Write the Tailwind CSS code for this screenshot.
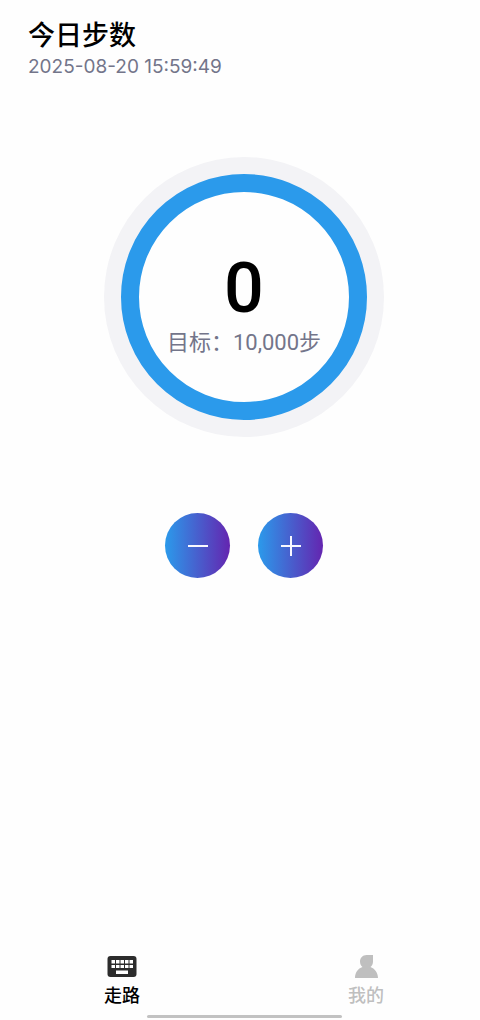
<!DOCTYPE html>
<html lang="zh-CN">
<head>
<meta charset="utf-8">
<meta name="viewport" content="width=device-width, initial-scale=1">
<title>今日步数</title>
<script src="https://cdn.jsdelivr.net/npm/@tailwindcss/browser@4"></script>
</head>
<body class="overflow-hidden bg-[#fefefe] font-['Roboto','Noto_Sans_CJK_SC',sans-serif] text-black">
<div class="-mr-2 flex min-h-screen flex-col">
  <header class="px-7 pt-5">
    <h1 class="text-[27px] leading-8 font-medium">今日步数</h1>
    <p class="font-['Inter','Noto_Sans_CJK_SC',sans-serif] text-[19px] leading-[30px] text-[#73758a]">2025-08-20 15:59:49</p>
  </header>
  <main class="flex flex-1 flex-col items-center pt-[75px]">
    <section class="flex size-[280px] rounded-full bg-[#f3f3f6] p-[17px]">
      <div class="flex flex-1 flex-col items-center rounded-full border-[18px] border-[#2b9aeb] bg-[#fefefe] pt-14">
        <p class="text-[70px] leading-20 font-medium">0</p>
        <p class="text-[22px] leading-[30px] whitespace-nowrap text-[#73758a]">目标：10,000步</p>
      </div>
    </section>
    <div class="flex gap-7 pt-[76px]">
      <button type="button" aria-label="减少" class="flex size-[65px] items-center justify-center rounded-full bg-linear-to-r/srgb from-[#2b9aeb] to-[#6425b0]">
        <svg class="size-5" viewBox="0 0 20 20" fill="none" stroke="#f8f8ff" stroke-width="2"><path d="M0 10H20"/></svg>
      </button>
      <button type="button" aria-label="增加" class="flex size-[65px] items-center justify-center rounded-full bg-linear-to-r/srgb from-[#2b9aeb] to-[#6425b0]">
        <svg class="size-5" viewBox="0 0 20 20" fill="none" stroke="#f8f8ff" stroke-width="2"><path d="M0 10H20M10 0V20"/></svg>
      </button>
    </div>
  </main>
  <nav class="grid grid-cols-2 text-lg leading-[30px]">
    <a href="#walk" aria-current="page" class="flex flex-col items-center">
      <svg class="h-7 w-8" viewBox="0 0 32 28"><rect x="1.500" y="3" width="29" height="21" rx="3" fill="#2c2c2c"/><path fill="#fff" d="M5.500 7h3.500v3.500h-3.500zM10 7h3.500v3.500h-3.500zM14.500 7h3.500v3.500h-3.500zM19 7h3.500v3.500h-3.500zM23.500 7h3.500v3.500h-3.500zM5.500 12h3.500v3h-3.500zM10 12h3.500v3h-3.500zM14.500 12h3.500v3h-3.500zM19 12h3.500v3h-3.500zM23.500 12h3.500v3h-3.500zM10 17.500h12v3.500H10z"/></svg>
      <span class="font-medium">走路</span>
    </a>
    <a href="#mine" class="flex flex-col items-center text-[#bfbfbf]">
      <svg class="h-7 w-8" viewBox="0 0 32 28" fill="currentColor"><path d="M16.500 2H23V8.500C23 11 22 12.800 20.500 14C24.500 15.500 28 19.500 28 25H5C5 19.500 8 15.500 12.500 14C11 12.800 10 11 10 8.500C10 4.900 12.900 2 16.500 2Z"/></svg>
      <span class="font-medium">我的</span>
    </a>
  </nav>
  <div class="mx-auto mt-1 mb-0.5 h-[3px] w-[195px] rounded-full bg-[#c2c2c2]"></div>
</div>
</body>
</html>
